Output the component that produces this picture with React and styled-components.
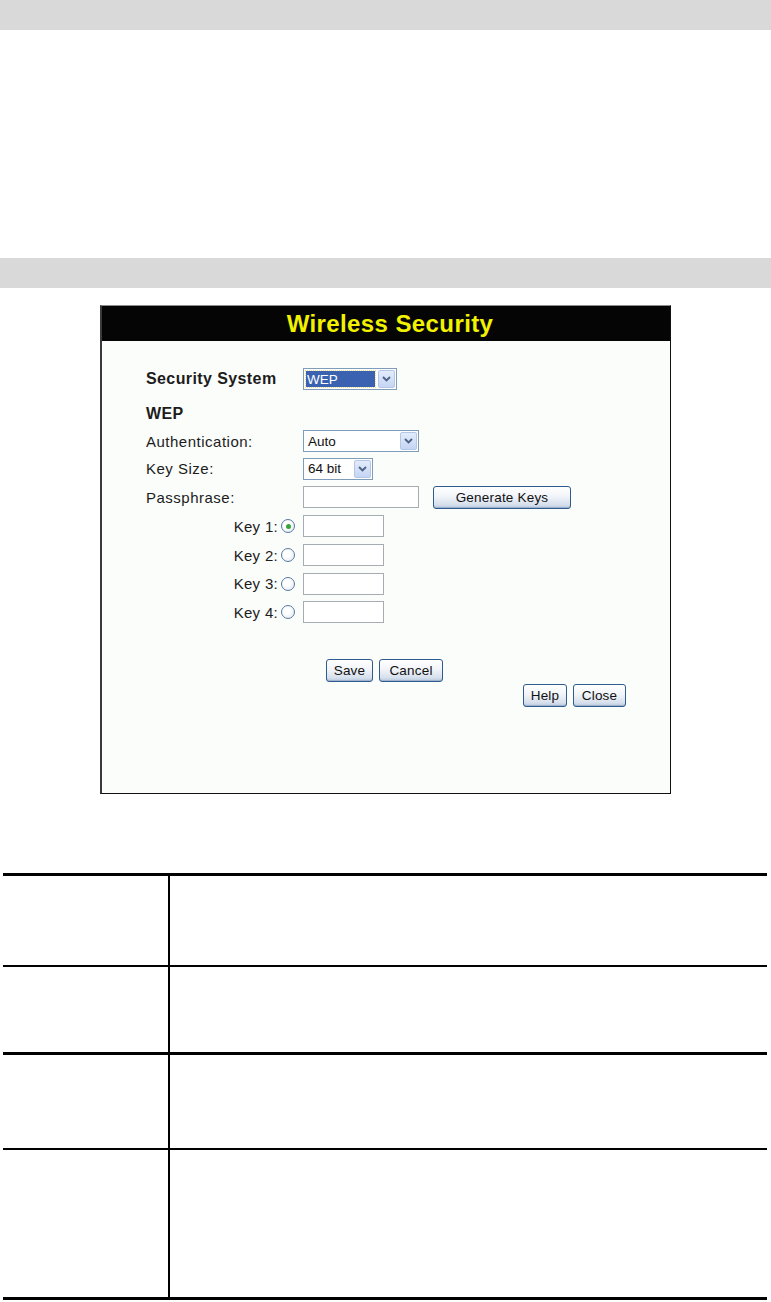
import styled, { createGlobalStyle } from "styled-components";

const Global = createGlobalStyle`
  html, body { margin: 0; padding: 0; background: #fff; }
  body { font-family: "Liberation Sans", Arial, sans-serif; }
`;

const Page = styled.div`
  width: 771px;
  display: flex;
  flex-direction: column;
`;

const GrayBar = styled.div`
  height: 30px;
  background: #d9d9d9;
`;

const Blank = styled.div`
  height: ${(p) => p.$h}px;
`;

const Window = styled.div`
  width: 568px;
  height: 487px;
  margin-left: 100px;
  border: 1px solid #111;
  border-top-color: #8c8c8c;
  border-left: 2px solid #3a3a3a;
  background: #fbfdfb;
  display: flex;
  flex-direction: column;
`;

const TitleBar = styled.div`
  height: 35px;
  background: #050505;
  color: #f2f200;
  font-weight: bold;
  font-size: 24px;
  letter-spacing: 0.4px;
  display: flex;
  align-items: center;
  justify-content: center;
  padding-left: 8px;
`;

const Form = styled.div`
  padding: 23px 44px 0 44px;
  display: flex;
  flex-direction: column;
  color: #1c1c1c;
  font-size: 15px;
`;

const Row = styled.div`
  display: grid;
  grid-template-columns: 157px auto;
  align-items: center;
  height: ${(p) => p.$h}px;
`;

const Label = styled.div`
  font-weight: ${(p) => (p.$bold ? "bold" : "normal")};
  font-size: ${(p) => (p.$bold ? "16px" : "15px")};
  letter-spacing: ${(p) => (p.$bold ? "0.4px" : "0.5px")};
`;

const KeyLabel = styled.div`
  display: flex;
  align-items: center;
  justify-content: flex-end;
  gap: 3px;
  padding-right: 8px;
  letter-spacing: 0.3px;
`;

const Controls = styled.div`
  display: flex;
  align-items: center;
  gap: 14px;
`;

const SelectBox = styled.div`
  width: ${(p) => p.$w}px;
  height: 22px;
  box-sizing: border-box;
  border: 1px solid #7f9db9;
  background: #fff;
  display: flex;
  align-items: stretch;
  font-size: 13.5px;
  color: #111;
`;

const SelectText = styled.div`
  flex: 1;
  display: flex;
  align-items: center;
  margin: ${(p) => (p.$active ? "2px" : "0")};
  padding-left: ${(p) => (p.$active ? "1px" : "4px")};
  background: ${(p) => (p.$active ? "#3a62b0" : "transparent")};
  color: ${(p) => (p.$active ? "#fff" : "#111")};
  outline: ${(p) => (p.$active ? "1px dotted #e8e090" : "none")};
`;

const DropButton = styled.div`
  width: 17px;
  margin: 1px;
  box-sizing: border-box;
  border: 1px solid #b5c7e6;
  border-radius: 2px;
  background: linear-gradient(#e3ecfb, #c4d5f3);
  display: flex;
  align-items: center;
  justify-content: center;
`;

const TextInput = styled.div`
  width: ${(p) => p.$w}px;
  height: 22px;
  box-sizing: border-box;
  border: 1px solid #a5acb2;
  background: #fff;
`;

const Button = styled.button`
  height: ${(p) => p.$h || 23}px;
  width: ${(p) => p.$w}px;
  padding: 0;
  box-sizing: border-box;
  border: 1px solid #2f5c8f;
  border-radius: 3px;
  background: linear-gradient(#ffffff 0%, #f1f4f9 45%, #d6dfec 85%, #b8c8de 100%);
  font-family: "Liberation Sans", Arial, sans-serif;
  font-size: 13.5px;
  letter-spacing: 0.2px;
  color: #111;
  box-shadow: inset 0 -1px 0 #9fb3cf;
`;

const Radio = styled.span`
  width: 12px;
  height: 12px;
  border-radius: 50%;
  border: 1px solid #5a7aa0;
  background: radial-gradient(circle at 40% 40%, #fff 30%, #dde4ee 100%);
  display: inline-flex;
  align-items: center;
  justify-content: center;
  &::after {
    content: "";
    width: 5px;
    height: 5px;
    border-radius: 50%;
    background: ${(p) => (p.$checked ? "#35a63a" : "transparent")};
  }
`;

const ButtonRow = styled.div`
  display: flex;
  gap: 6px;
  height: ${(p) => p.$h}px;
  align-items: center;
  padding-left: ${(p) => p.$left || 0}px;
  justify-content: ${(p) => (p.$right ? "flex-end" : "flex-start")};
`;

const Table = styled.div`
  margin-left: 3px;
  width: 764px;
  border-top: 3px solid #000;
  border-bottom: 3px solid #000;
`;

const TableRow = styled.div`
  display: grid;
  grid-template-columns: 167px 1fr;
  height: ${(p) => p.$h}px;
  border-top: ${(p) => (p.$first ? "0" : p.$thick ? "3px" : "2px")} solid #000;
`;

const NameCell = styled.div`
  border-right: 2px solid #000;
`;

const DescCell = styled.div``;

const Chevron = () => (
  <svg width="9" height="6" viewBox="0 0 9 6">
    <path d="M1 1 L4.5 4.5 L8 1" fill="none" stroke="#4d6185" strokeWidth="1.8" />
  </svg>
);

const Select = ({ w, value, active }) => (
  <SelectBox $w={w}>
    <SelectText $active={active}>{value}</SelectText>
    <DropButton>
      <Chevron />
    </DropButton>
  </SelectBox>
);

const keys = [1, 2, 3, 4];
const tableRows = [
  { h: 89, first: true },
  { h: 85 },
  { h: 93, thick: true },
  { h: 147 },
];

export default function App() {
  return (
    <Page>
      <Global />
      <GrayBar />
      <Blank $h={228} />
      <GrayBar />
      <Blank $h={17} />
      <Window>
        <TitleBar>Wireless Security</TitleBar>
        <Form>
          <Row $h={30}>
            <Label $bold>Security System</Label>
            <Select w={94} value="WEP" active />
          </Row>
          <Blank $h={7} />
          <Row $h={26}>
            <Label $bold>WEP</Label>
          </Row>
          <Row $h={28}>
            <Label>Authentication:</Label>
            <Select w={116} value="Auto" />
          </Row>
          <Row $h={27}>
            <Label>Key Size:</Label>
            <Select w={70} value="64 bit" />
          </Row>
          <Row $h={30}>
            <Label>Passphrase:</Label>
            <Controls>
              <TextInput $w={116} />
              <Button $w={138}>Generate Keys</Button>
            </Controls>
          </Row>
          {keys.map((k) => (
            <Row $h={28.7} key={k}>
              <KeyLabel>
                Key {k}: <Radio $checked={k === 1} />
              </KeyLabel>
              <TextInput $w={81} />
            </Row>
          ))}
          <Blank $h={31} />
          <ButtonRow $h={25} $left={180}>
            <Button $w={47}>Save</Button>
            <Button $w={64}>Cancel</Button>
          </ButtonRow>
          <ButtonRow $h={25} $right>
            <Button $w={44}>Help</Button>
            <Button $w={53}>Close</Button>
          </ButtonRow>
        </Form>
      </Window>
      <Blank $h={79} />
      <Table>
        {tableRows.map((r, i) => (
          <TableRow key={i} $h={r.h} $first={r.first} $thick={r.thick}>
            <NameCell />
            <DescCell />
          </TableRow>
        ))}
      </Table>
    </Page>
  );
}
